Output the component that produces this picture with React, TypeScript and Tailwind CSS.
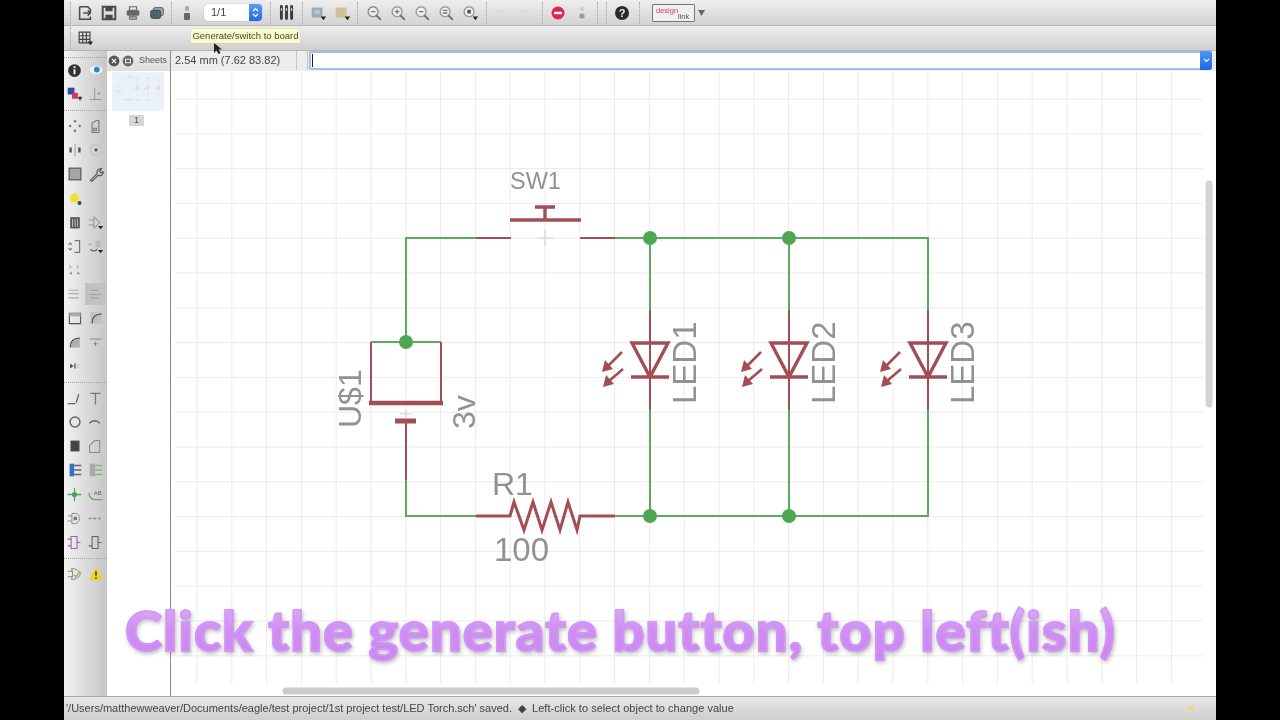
import { FC, ReactNode } from "react";

const DARK = "#4a4a4a";
const RED = "#a34e54";
const GREEN = "#5fa863";

const Ic: FC<{ children: ReactNode; size?: number }> = ({ children, size = 20 }) => (
  <svg width={size} height={size} viewBox="0 0 20 20" fill="none">
    {children}
  </svg>
);

const Caret = () => <path d="M13 14h6l-3 4z" fill="#222" />;

const Slot: FC<{ children?: ReactNode; className?: string }> = ({ children, className = "" }) => (
  <div className={`w-6 h-6 flex items-center justify-center shrink-0 ${className}`}>{children}</div>
);

const Sep = ({ className = "" }: { className?: string }) => (
  <div className={`h-[22px] w-px shrink-0 border-l border-dotted border-gray-400 ${className}`} />
);

const Lens: FC<{ mark?: string; color?: string }> = ({ mark, color = "#9a9a9a" }) => (
  <Ic size={18}>
    <circle cx="9" cy="8.500" r="5.500" fill="#eee" stroke={color} strokeWidth="1.5" />
    <path d="M13 13l4 4" stroke="#777" strokeWidth="2.200" strokeLinecap="round" />
    {mark && <path d={mark} stroke="#777" strokeWidth="1.400" />}
  </Ic>
);

const TopBar = () => (
  <div className="h-[26px] flex items-center border-b border-[#b5b5b5] bg-gradient-to-b from-[#eeeeee] to-[#d3d3d3]">
    <Sep className="ml-[6px]" />
    <Slot className="ml-[2px]">
      <Ic size={18}>
        <path d="M4 3h9l3 3v3M16 14v3H4V3" stroke={DARK} strokeWidth="1.700" />
        <path d="M8 10h8M13 7l3 3-3 3" stroke={DARK} strokeWidth="1.700" />
      </Ic>
    </Slot>
    <Slot>
      <Ic size={18}>
        <path d="M3 3h14v14H3z" stroke={DARK} strokeWidth="2.200" />
        <path d="M6 3h8v5H6zM6 12h8v5H6z" fill={DARK} />
      </Ic>
    </Slot>
    <Slot>
      <Ic size={18}>
        <path d="M6 3h8v4H6z" stroke="#666" strokeWidth="1.200" />
        <rect x="3" y="7" width="14" height="6" rx="1.500" fill="#666" />
        <path d="M6 14h8v3H6z" fill="#aaa" stroke="#666" />
      </Ic>
    </Slot>
    <Slot>
      <Ic size={18}>
        <rect x="6" y="4" width="11" height="9" rx="2" fill="#a5a5a5" stroke="#555" />
        <rect x="3" y="7" width="11" height="9" rx="2" fill="#4a6570" stroke="#444" />
      </Ic>
    </Slot>
    <Sep className="ml-[2px]" />
    <Slot className="ml-[3px]">
      <Ic>
        <rect x="8" y="3" width="4" height="5" rx="1.500" fill="#aaa" />
        <rect x="7" y="10" width="6" height="7" rx="1" fill="#666" />
      </Ic>
    </Slot>
    <div className="ml-[5px] w-[58px] h-[17px] flex rounded-[4px] bg-white shadow-[0_0_1px_#888] overflow-hidden shrink-0">
      <div className="flex-1 pl-[7px] text-[11px] leading-[17px] text-[#444]">1/1</div>
      <div className="w-[13px] flex items-center justify-center bg-gradient-to-b from-[#5a9bf5] to-[#2468e0]">
        <svg width="7" height="11" viewBox="0 0 7 11" fill="none" stroke="#fff" strokeWidth="1.200">
          <path d="M1 4l2.500-2.500L6 4M1 7l2.500 2.500L6 7" />
        </svg>
      </div>
    </div>
    <Sep className="ml-[8px]" />
    <Slot className="ml-[3px]">
      <Ic size={17}>
        <path d="M4 3v14M10 3v14M16 3v14" stroke="#3a3a3a" strokeWidth="3.400" strokeLinecap="round" />
        <path d="M4 5v3M10 5v3M16 5v3" stroke="#ddd" strokeWidth="1.400" />
      </Ic>
    </Slot>
    <Sep className="ml-[4px]" />
    <Slot className="ml-[3px]">
      <Ic size={18}>
        <rect x="3" y="4" width="12" height="11" fill="#9aacb8" />
        <path d="M6 7h6v4H6z" fill="#b9cad6" />
        <Caret />
      </Ic>
    </Slot>
    <Slot>
      <Ic size={18}>
        <rect x="3" y="4" width="12" height="11" fill="#d0bf98" />
        <Caret />
      </Ic>
    </Slot>
    <Sep className="ml-[3px]" />
    <Slot className="ml-[4px]">
      <Lens color="#8a8a8a" mark="M6.500 8.500h5" />
    </Slot>
    <Slot>
      <Lens mark="M6.500 8.500h5M9 6v5" />
    </Slot>
    <Slot>
      <Lens mark="M6.500 8.500h5" />
    </Slot>
    <Slot>
      <Lens mark="M6.500 7h5M6.500 10h5" />
    </Slot>
    <Slot>
      <Ic size={18}>
        <circle cx="9" cy="8.500" r="5.500" fill="#eee" stroke="#999" strokeWidth="1.500" />
        <rect x="7" y="6.500" width="4" height="4" fill="#555" />
        <Caret />
      </Ic>
    </Slot>
    <Sep className="ml-[4px]" />
    <Slot className="ml-[3px]">
      <Ic size={18}>
        <path d="M4 12c2-5 8-6 12-2" stroke="#dcdcdc" strokeWidth="2.400" />
      </Ic>
    </Slot>
    <Slot>
      <Ic size={18}>
        <path d="M16 12c-2-5-8-6-12-2" stroke="#dcdcdc" strokeWidth="2.400" />
      </Ic>
    </Slot>
    <Sep className="ml-[4px]" />
    <Slot className="ml-[3px]">
      <Ic>
        <circle cx="10" cy="10" r="6.500" fill="#e0264f" />
        <path d="M6 10h8" stroke="#fff" strokeWidth="2.400" />
      </Ic>
    </Slot>
    <Slot>
      <Ic>
        <rect x="8.500" y="4" width="3" height="4" rx="1.200" fill="#c8c8c8" />
        <circle cx="10" cy="13" r="2.600" fill="#9a9a9a" />
      </Ic>
    </Slot>
    <Sep className="ml-[3px]" />
    <Sep className="ml-[8px]" />
    <Slot className="ml-[3px]">
      <Ic>
        <circle cx="10" cy="10" r="7" fill="#2b2b2b" />
        <text x="10" y="14" textAnchor="middle" fontSize="11" fontWeight="700" fill="#eee">
          ?
        </text>
      </Ic>
    </Slot>
    <Sep className="ml-[5px]" />
    <div className="relative ml-[12px] w-[43px] h-[18px] shrink-0 border border-[#777] rounded-[1px] bg-[#f0f0f0] text-[7.5px] leading-none">
      <span className="absolute left-[3px] top-[2px] text-[#d8406a]">design</span>
      <span className="absolute left-[25px] top-[8px] text-[#555]">link</span>
    </div>
    <svg className="ml-[3px]" width="7" height="7" viewBox="0 0 7 7">
      <path d="M0 1h7L3.500 7z" fill="#666" />
    </svg>
  </div>
);

const SecondBar = () => (
  <div className="relative h-[25px] flex items-center border-b border-[#b5b5b5] bg-gradient-to-b from-[#eeeeee] to-[#cfcfcf]">
    <Sep className="ml-[6px]" />
    <Slot className="ml-[2px]">
      <Ic size={18}>
        <path d="M3.500 3.500h12v12h-12zM7.500 3.500v12M11.500 3.500v12M3.500 7.500h12M3.500 11.500h12" stroke="#444" strokeWidth="1.300" />
        <Caret />
      </Ic>
    </Slot>
    {/* tooltip + pointer sit over the bar */}
    <div className="absolute left-[127px] top-[3px] h-[14px] w-[109px] bg-[#fcfcc9] shadow-[0_0_1px_#999] rounded-[1px] text-[9.5px] leading-[14px] text-center text-[#444]">
      Generate/switch to board
    </div>
    <svg className="absolute left-[149px] top-[16px]" width="10" height="13" viewBox="0 0 10 13">
      <path d="M1 1v10l2.500-2.500L5.500 12l2-1L5.500 7.500H9z" fill="#222" />
    </svg>
  </div>
);

const Row: FC<{ a?: ReactNode; b?: ReactNode; hi?: boolean }> = ({ a, b, hi }) => (
  <div className="h-6 flex items-center shrink-0">
    <div className="w-[21px] h-6 flex items-center justify-center">{a}</div>
    <div className={`w-[21px] h-[22px] flex items-center justify-center ${hi ? "bg-[#c2c2c2]" : ""}`}>{b}</div>
  </div>
);

const HSep = ({ className = "" }: { className?: string }) => (
  <div className={`h-px w-full border-t border-dotted border-gray-400 shrink-0 ${className}`} />
);

const T: FC<{ d: string; c?: string; w?: number }> = ({ d, c = "#666", w = 1.5 }) => (
  <Ic size={17}>
    <path d={d} stroke={c} strokeWidth={w} />
  </Ic>
);

const LeftBar = () => (
  <div className="w-[43px] shrink-0 flex flex-col bg-gradient-to-r from-[#f2f2f2] to-[#c6c6c6]">
    <HSep className="mt-[6px]" />
    <Row
      a={
        <Ic size={17}>
          <circle cx="10" cy="10" r="7.500" fill="#333" />
          <path d="M10 8.500v6M10 5v2" stroke="#fff" strokeWidth="2.200" />
        </Ic>
      }
      b={
        <Ic size={16}>
          <ellipse cx="10" cy="10" rx="8" ry="5" fill="#f4f4f4" />
          <circle cx="11" cy="9.500" r="3.600" fill="#2a86c8" />
        </Ic>
      }
    />
    <Row
      a={
        <Ic size={17}>
          <rect x="2" y="2" width="8" height="8" fill="#2c4fa8" />
          <rect x="7" y="8" width="7" height="7" fill="#d8345f" />
          <path d="M14 14h5M16.500 12v5" stroke="#222" strokeWidth="1.400" />
        </Ic>
      }
      b={<T d="M9 2v14M3 16h14M12 9h4M14 7v4" c="#999" w={1.2} />}
    />
    <HSep className="mt-[4px]" />
    <div className="mt-[3px] flex flex-col">
      <Row
        a={
          <Ic size={16}>
            <path d="M10 2l2 2-2 2-2-2zM10 14l2 2-2 2-2-2zM2 10l2-2 2 2-2 2zM14 10l2-2 2 2-2 2z" fill="#777" />
          </Ic>
        }
        b={<T d="M6 6l5-3h3v14H6zM8 12h3v3H8z" c="#777" w={1.3} />}
      />
      <Row
        a={
          <Ic size={16}>
            <path d="M10 2v16" stroke="#888" strokeWidth="1" />
            <path d="M3 7h3v6H3zM14 7h3v6h-3z" fill="#555" />
          </Ic>
        }
        b={
          <Ic size={16}>
            <circle cx="10" cy="10" r="7" stroke="#c4c4c4" strokeWidth="1.600" />
            <circle cx="10" cy="10" r="1.800" fill="#444" />
          </Ic>
        }
      />
      <Row
        a={
          <Ic size={18}>
            <rect x="3.500" y="3.500" width="13" height="13" fill="#a5a5a5" stroke="#555" strokeWidth="1.300" />
          </Ic>
        }
        b={<T d="M4 17l8-8c-1-3 1-6 5-6l-2 3 1 2 3-1c0 4-3 5-6 4l-7 7z" c="#555" w={1.4} />}
      />
      <Row
        a={
          <Ic size={20}>
            <circle cx="9.500" cy="10" r="4.500" fill="#f5e02e" />
            <circle cx="14.500" cy="15" r="2" fill="#444" />
          </Ic>
        }
      />
      <Row
        a={
          <Ic size={16}>
            <path d="M4 4h12v14H4z" fill="#555" />
            <path d="M7 6v10M10 6v10M13 6v10" stroke="#ddd" strokeWidth="1" />
          </Ic>
        }
        b={
          <Ic size={17}>
            <path d="M8 3v14M8 3l7 7-7 7M2 7h6M2 13h6" stroke="#999" strokeWidth="1.200" />
            <Caret />
          </Ic>
        }
      />
      <Row
        a={<T d="M3 8l2-2 2 2M3 12l2 2 2-2M10 3h6v14h-6" c="#777" w={1.4} />}
        b={
          <Ic size={17}>
            <path d="M2 6h3v3H2zM10 3h6v8h-6z" fill="#bbb" />
            <path d="M4 13c2 3 6 3 8 0" stroke="#666" strokeWidth="1.400" />
            <Caret />
          </Ic>
        }
      />
      <Row
        a={
          <Ic size={16}>
            <path d="M3 3l4 3-4 3zM12 3l4 3-4 3z" fill="#c0c0c0" />
            <path d="M3 14l3-2v4zM16 14l-3-2v4z" fill="#888" />
          </Ic>
        }
      />
      <Row a={<T d="M3 5h12M3 9h12M3 14h12" c="#aaa" w={1.3} />} b={<T d="M4 5h9M3 10h14M4 14h10" c="#a0a0a0" w={1.3} />} hi />
      <Row
        a={
          <Ic size={16}>
            <path d="M3 4h14v13H3z" stroke="#555" strokeWidth="1.400" />
            <path d="M3 4h14v4H3z" fill="#aaa" />
          </Ic>
        }
        b={
          <Ic size={16}>
            <path d="M3 3h14v14H3z" fill="#c0c0c0" />
            <path d="M5 17c0-8 4-12 12-12" stroke="#444" strokeWidth="1.400" />
          </Ic>
        }
      />
      <Row
        a={
          <Ic size={16}>
            <path d="M4 17c0-8 4-12 12-12v12z" fill="#b0b0b0" />
            <path d="M4 17c0-8 4-12 12-12" stroke="#444" strokeWidth="1.400" />
          </Ic>
        }
        b={<T d="M3 6h14M10 9v5M7.500 11.500h5" c="#888" w={1.2} />}
      />
      <Row
        a={
          <Ic size={16}>
            <path d="M4 7l4 3-4 3z" fill="#444" />
            <path d="M9 7h2v6H9z" fill="#666" />
            <path d="M13 7h2v6h-2z" fill="#ccc" />
          </Ic>
        }
      />
    </div>
    <HSep className="mt-[4px]" />
    <div className="mt-[3px] flex flex-col">
      <Row a={<T d="M2 16h9M12 15l3-10" c="#666" w={1.5} />} b={<T d="M4 4h12M10 4v13" c="#777" w={1.5} />} />
      <Row
        a={
          <Ic size={18}>
            <circle cx="10" cy="10" r="5.500" stroke="#666" strokeWidth="1.600" />
          </Ic>
        }
        b={<T d="M3 11c3-4 9-4 12 0" c="#666" w={1.8} />}
      />
      <Row
        a={
          <Ic size={18}>
            <rect x="5" y="4" width="10" height="12" fill="#444" />
          </Ic>
        }
        b={<T d="M3 17V9l6-6h6v14z" c="#888" w={1.2} />}
      />
      <Row
        a={
          <Ic size={18}>
            <rect x="4" y="3" width="5" height="14" fill="#2f73c6" />
            <path d="M9 5h8M9 10h8M9 15h8" stroke="#666" strokeWidth="1.600" />
          </Ic>
        }
        b={
          <Ic size={18}>
            <rect x="3" y="3" width="6" height="14" fill="#aaa" />
            <path d="M9 5h8M9 10h8M9 15h8" stroke="#7dbb7f" strokeWidth="1.600" />
          </Ic>
        }
      />
      <Row
        a={
          <Ic size={17}>
            <path d="M2 10h16M10 2v16" stroke="#5ba661" strokeWidth="1.500" />
            <circle cx="10" cy="10" r="3" fill="#4c9c52" />
          </Ic>
        }
        b={
          <Ic size={17}>
            <path d="M2 8c1 6 4 8 8 8h8" stroke="#66b06a" strokeWidth="1.600" />
            <text x="8" y="11" fontSize="7" fill="#666">
              AB
            </text>
          </Ic>
        }
      />
      <Row
        a={
          <Ic size={17}>
            <path d="M7 4h4c3 0 5 3 5 6s-2 6-5 6H7zM2 7h5M2 13h5" stroke="#888" strokeWidth="1.100" />
            <path d="M9 8h4v4H9z" fill="#777" />
          </Ic>
        }
        b={<T d="M2 10h3M7 10h4M13 10h3" c="#888" w={1.5} />}
      />
      <Row
        a={<T d="M6 3h7v14H6zM2 6h4M2 14h4M13 10h4" c="#9c66ac" w={1.3} />}
        b={<T d="M6 3h7v14H6zM2 14h4M13 10h4" c="#666" w={1.3} />}
      />
    </div>
    <HSep className="mt-[4px]" />
    <div className="mt-[3px]">
      <Row
        a={
          <Ic size={18}>
            <path d="M6 4c6 0 9 3 10 6-1 3-4 6-10 6 2-4 2-8 0-12zM2 7h5M2 13h5" stroke="#888" strokeWidth="1.100" />
            <path d="M9 11l2 2 5-6" stroke="#86b44f" strokeWidth="1.400" />
          </Ic>
        }
        b={
          <Ic size={18}>
            <path d="M10 2l8 15H2z" fill="#f3cf2f" />
            <path d="M10 7v5M10 13.500v2" stroke="#5a4a10" strokeWidth="1.800" />
          </Ic>
        }
      />
    </div>
  </div>
);

const Wire: FC<{ d: string; c: string; w?: number }> = ({ d, c, w = 2 }) => <path d={d} stroke={c} strokeWidth={w} fill="none" />;

const LedSymbol: FC<{ x: number }> = ({ x }) => (
  <g>
    <Wire d={`M${x} 238V310`} c={GREEN} />
    <Wire d={`M${x} 410V516`} c={GREEN} />
    <Wire d={`M${x} 310V410`} c={RED} />
    <Wire d={`M${x - 18} 343H${x + 18}L${x} 377ZM${x - 19} 377H${x + 19}`} c={RED} w={3.4} />
    <Wire d={`M${x - 28} 352L${x - 42} 366M${x - 27} 369L${x - 41} 381`} c={RED} w={2.6} />
    <path d={`M${x - 48} 372L${x - 45} 360L${x - 37} 369ZM${x - 47} 387L${x - 44} 375L${x - 36} 384Z`} fill={RED} />
  </g>
);

// everything but the labels; also reused small for the sheet preview
const Circuit = () => (
  <g>
    <Wire d="M406 342V238H476" c={GREEN} />
    <Wire d="M615 238H928V310M928 410V516H615" c={GREEN} />
    <Wire d="M371 342H441" c={GREEN} />
    <Wire d="M406 480V516H476" c={GREEN} />
    <Wire d="M476 238H511M580 238H615" c={RED} />
    <Wire d="M510 220H581M545 221V207M535 207H555" c={RED} w={3.4} />
    <Wire d="M371 342V403M441 342V403M406 421V480" c={RED} />
    <Wire d="M369 403H443" c={RED} w={4.5} />
    <Wire d="M395 421H416" c={RED} w={5} />
    <Wire d="M476 516H510L514 502L524 530L533 502L542 530L551 502L560 530L568 502L577 530L580 516H615" c={RED} w={3} />
    <LedSymbol x={650} />
    <LedSymbol x={789} />
    <LedSymbol x={928} />
    {[
      [650, 238],
      [789, 238],
      [406, 342],
      [650, 516],
      [789, 516],
    ].map(([cx, cy]) => (
      <circle key={`${cx}-${cy}`} cx={cx} cy={cy} r="7" fill="#4ea552" />
    ))}
  </g>
);

const Rotated: FC<{ x: number; y: number; t: string; size?: number }> = ({ x, y, t, size = 32 }) => (
  <text transform={`translate(${x},${y}) rotate(-90)`} fontSize={size} fill="#929292">
    {t}
  </text>
);

const vLines = Array.from({ length: 29 }, (_, i) => 197 + i * 34.8);
const hLines = Array.from({ length: 17 }, (_, i) => 99 + i * 34.8);

const Canvas = () => (
  <div className="relative flex-1 bg-white">
    <svg className="block w-full h-full" viewBox="171 71 1045 625">
      {vLines.map((x) => (
        <path key={x} d={`M${x} 72V684`} stroke="#ebebeb" />
      ))}
      {hLines.map((y) => (
        <path key={y} d={`M175 ${y}H1203`} stroke="#ebebeb" />
      ))}
      <path d="M545 230V246M537 238H553" stroke="#dcc9ca" />
      <path d="M406 410V418M400 414H412" stroke="#dcc9ca" />
      <Circuit />
      <text x="510" y="189" fontSize="23.500" fill="#929292">
        SW1
      </text>
      <text x="492" y="495" fontSize="32" fill="#929292">
        R1
      </text>
      <text x="494" y="561" fontSize="33" fill="#929292">
        100
      </text>
      <Rotated x={361} y={428} t="U$1" />
      <Rotated x={475} y={429} t="3v" />
      <Rotated x={696} y={404} t="LED1" size={33} />
      <Rotated x={835} y={404} t="LED2" size={33} />
      <Rotated x={974} y={404} t="LED3" size={33} />
      <path d="M286 691H696" stroke="#cbcbcb" strokeWidth="7" strokeLinecap="round" />
      <path d="M1209 184V404" stroke="#d4d4d4" strokeWidth="7" strokeLinecap="round" />
    </svg>
  </div>
);

const CommandRow = () => (
  <div className="h-5 flex items-stretch bg-[#ececec] border-b border-[#eeeeee] text-[11px] text-[#444]">
    <div className="w-[126px] pl-[4px] leading-[19px] border-r border-[#c4c4c4]">2.54 mm (7.62 83.82)</div>
    <div className="w-[11px] border-r border-[#c4c4c4]" />
    <div className="ml-[1px] w-[903px] flex border-2 border-[#9cc3ec] rounded-[2px] bg-white">
      <div className="flex-1 pl-[1px] flex items-center">
        <div className="w-px h-[13px] bg-[#222]" />
      </div>
      <div className="w-[12px] -my-[2px] -mr-[2px] rounded-r-[3px] flex items-center justify-center bg-gradient-to-b from-[#4f95f5] to-[#1f66e5]">
        <svg width="7" height="5" viewBox="0 0 7 5" fill="none" stroke="#fff" strokeWidth="1.200">
          <path d="M1 1l2.500 2.500L6 1" />
        </svg>
      </div>
    </div>
  </div>
);

const SheetsPanel = () => (
  <div className="w-[64px] shrink-0 flex flex-col bg-white border-r border-[#8a8a8a]">
    <div className="h-5 flex items-center bg-gradient-to-b from-[#ececec] to-[#dddddd]">
      <div className="w-[14px] flex justify-center">
        <Ic size={12}>
          <circle cx="10" cy="10" r="9" fill="#555" />
          <path d="M6.500 6.500l7 7M13.500 6.500l-7 7" stroke="#fff" strokeWidth="2" />
        </Ic>
      </div>
      <div className="w-[14px] flex justify-center">
        <Ic size={12}>
          <circle cx="10" cy="10" r="9" fill="#666" />
          <rect x="6" y="7" width="8" height="6" fill="none" stroke="#fff" strokeWidth="1.500" />
        </Ic>
      </div>
      <div className="ml-[4px] text-[9px] text-[#555]">Sheets</div>
    </div>
    <div className="mt-[1px] mx-[5px] w-[52px] h-[39px] bg-[#ebf1fa]">
      <svg className="opacity-40" width="52" height="39" viewBox="320 160 680 500">
        <Circuit />
      </svg>
    </div>
    <div className="mt-[4px] ml-[22px] w-[15px] h-[11px] bg-[#d6d6d6] text-[9px] leading-[11px] text-center text-[#555]">1</div>
  </div>
);

const Caption = () => (
  <div className="absolute left-[61px] top-[596px] text-[56px] leading-[68px] tracking-[1.07px] font-black whitespace-nowrap font-['Lato',sans-serif] text-transparent bg-clip-text bg-gradient-to-b from-[#e0b6f8] via-[#cf8ef4] to-[#ca85f0] [-webkit-text-stroke:1.5px_#d097f5] drop-shadow-[1px_2px_2px_rgba(110,110,110,0.45)]">
    Click the generate button, top left(ish)
  </div>
);

const App = () => {
  return (
    <div className="h-[720px] w-[1280px] overflow-hidden bg-black px-16 font-['Liberation_Sans',Arial,sans-serif]">
      <div className="relative h-full flex flex-col bg-[#e6e6e6] blur-[0.5px]">
        <TopBar />
        <SecondBar />
        <div className="flex-1 min-h-0 flex">
          <LeftBar />
          <SheetsPanel />
          <div className="flex-1 flex flex-col min-w-0">
            <CommandRow />
            <Canvas />
          </div>
        </div>
        <div className="h-[24px] shrink-0 flex items-center border-t border-[#a8a8a8] bg-gradient-to-b from-[#e9e9e9] to-[#cdcdcd] pl-[2px] text-[11px] text-[#444]">
          <span>'/Users/matthewweaver/Documents/eagle/test project/1st project test/LED Torch.sch' saved.</span>
          <span className="ml-[6px]">◆</span>
          <span className="ml-[6px] tracking-[0.03px]">Left-click to select object to change value</span>
          <div className="ml-auto mr-[22px] w-[7px] h-[7px] rounded-full bg-[#e6d9a0]" />
        </div>
        <Caption />
      </div>
    </div>
  );
};

export default App;
